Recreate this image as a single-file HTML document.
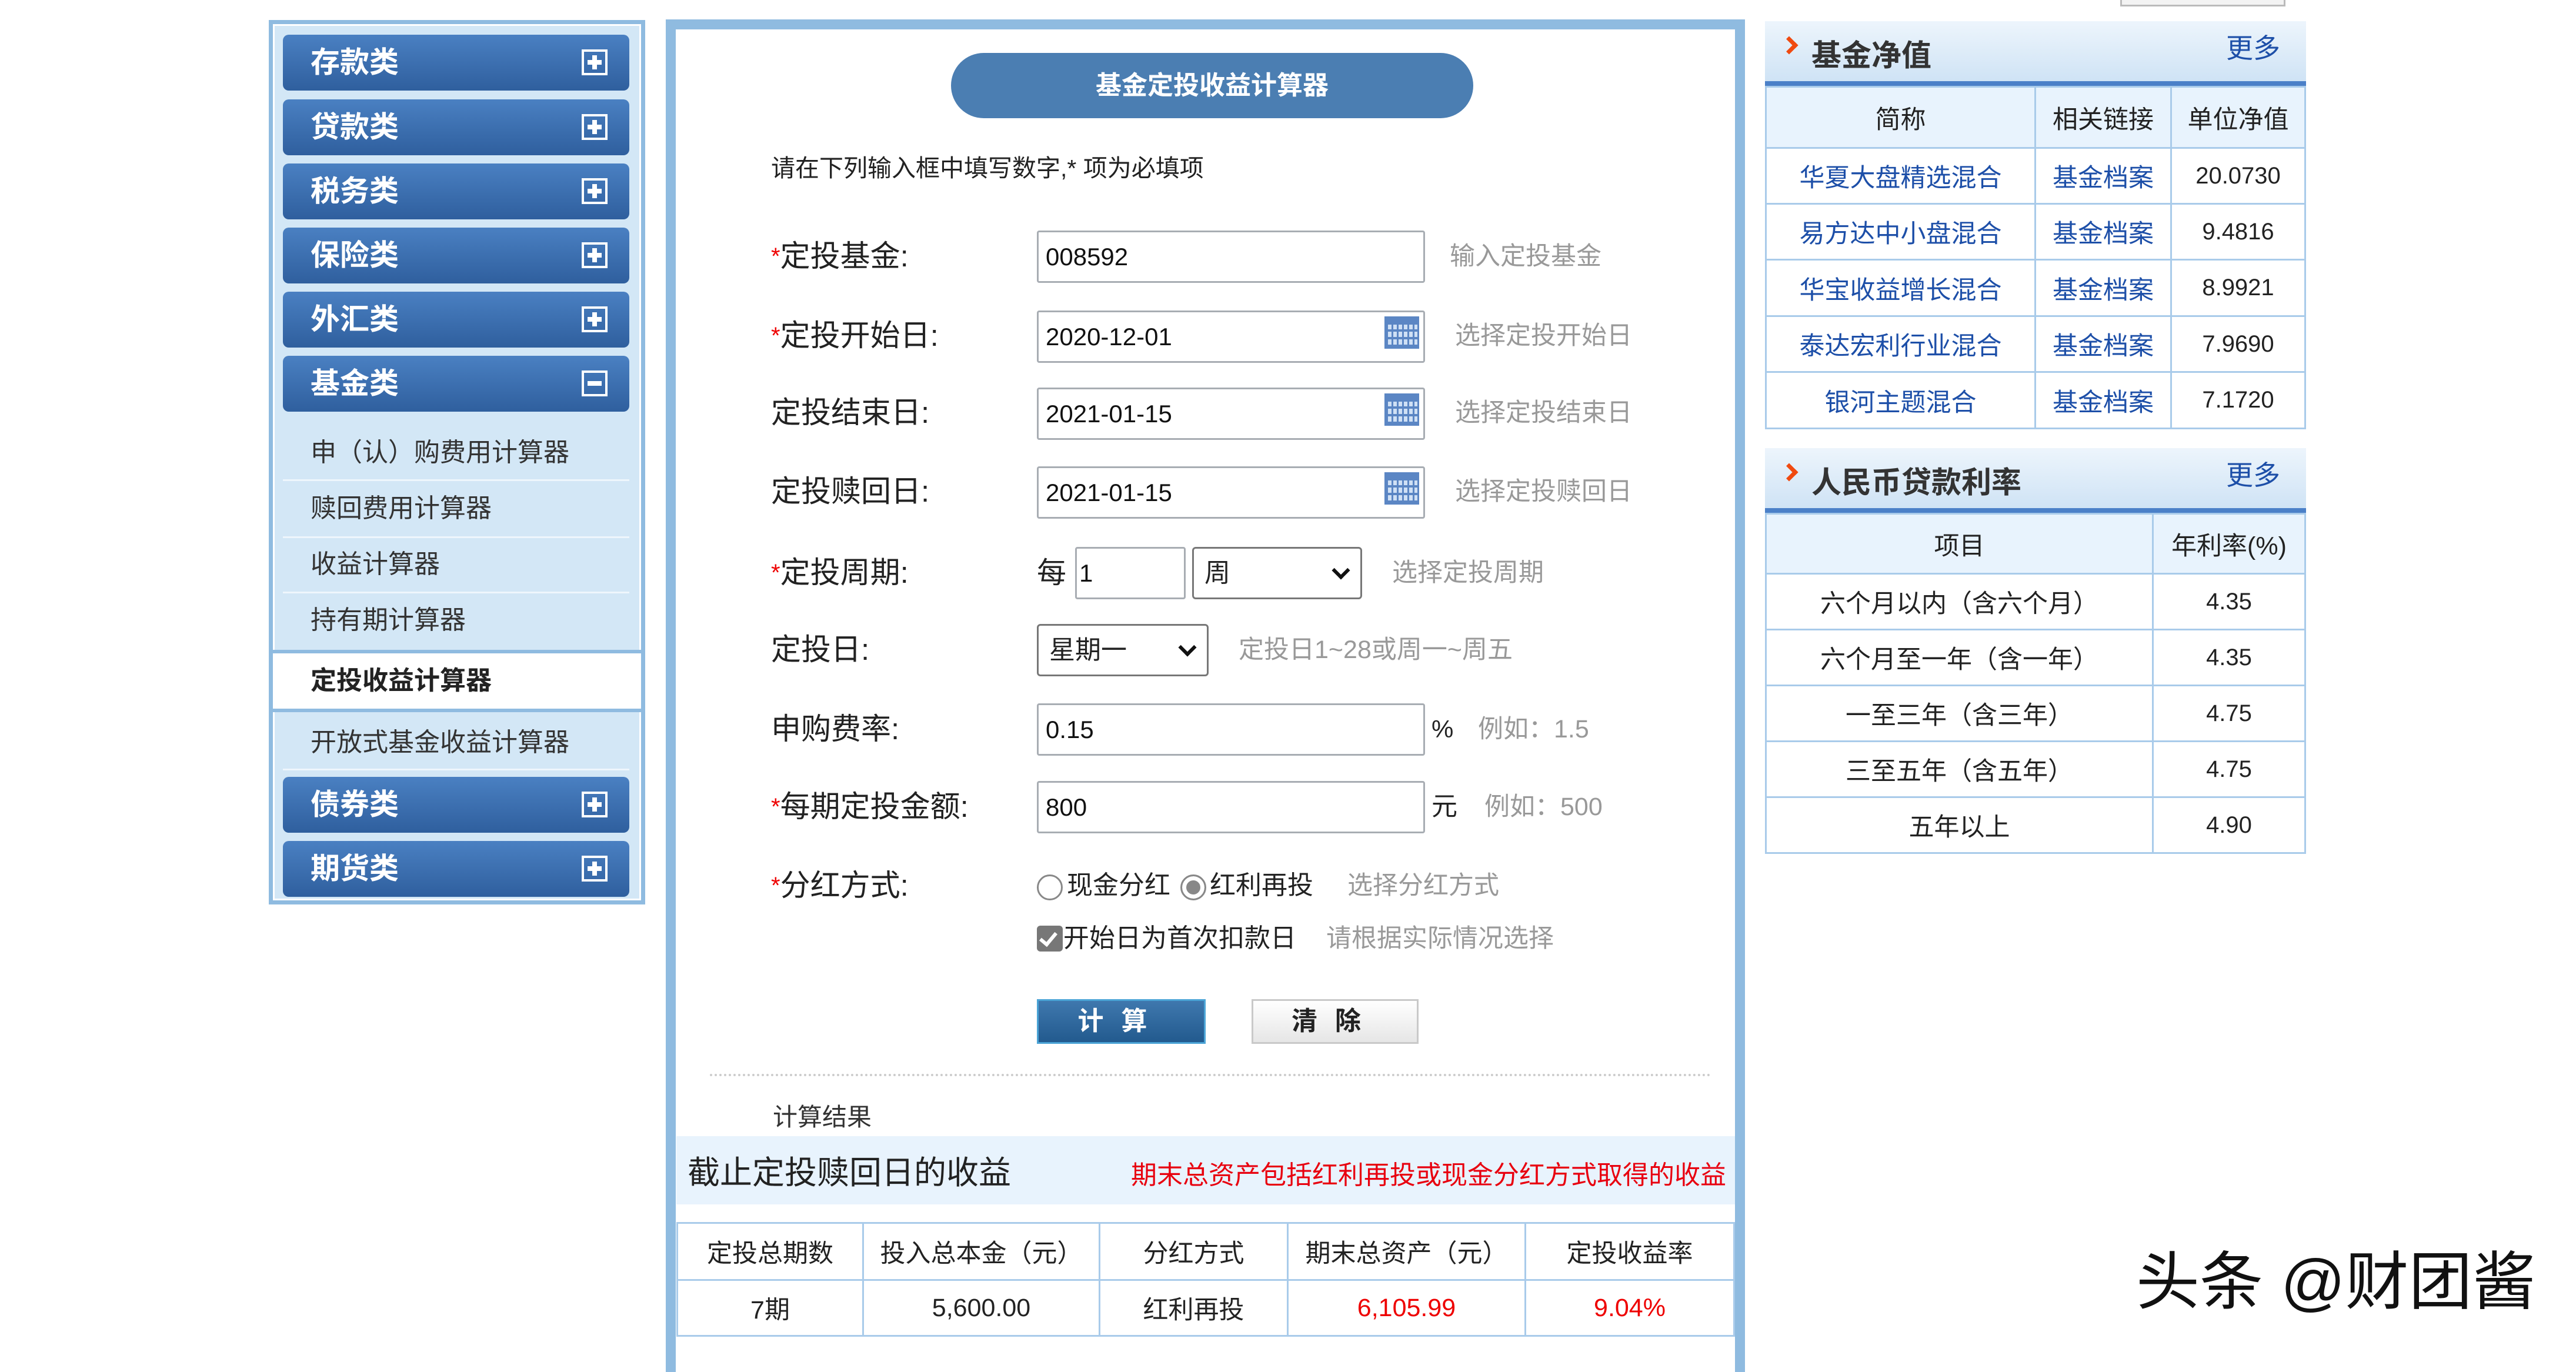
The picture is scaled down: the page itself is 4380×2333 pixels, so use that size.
<!DOCTYPE html>
<html><head><meta charset="utf-8"><style>
*{margin:0;padding:0;box-sizing:border-box}
body{width:4380px;height:2300px;background:#fff;position:relative;overflow:hidden;font-family:"Liberation Sans","Noto Sans CJK SC",sans-serif;color:#222}
.a{position:absolute;white-space:nowrap}
.btn{position:absolute;left:481px;width:589px;height:95px;border-radius:10px;background:linear-gradient(#4a80c2,#2f5f9e);color:#fff;font-weight:bold;font-size:50px;line-height:95px;padding-left:47px}
.pl{position:absolute;right:37px;top:25px;width:44px;height:44px;border:4px solid #fff}
.pl:before{content:"";position:absolute;left:6px;right:6px;top:14px;height:8px;background:#fff}
.pl.p:after{content:"";position:absolute;top:6px;bottom:6px;left:14px;width:8px;background:#fff}
.sub{position:absolute;left:528px;font-size:44px;color:#333;line-height:60px}
.sep{position:absolute;left:481px;width:589px;height:3px;background:#eef6fc}
.lbl{position:absolute;left:1311px;font-size:51px;line-height:70px;color:#222}
.lbl i{color:#e00;font-style:normal;font-size:40px;vertical-align:top}
.inp{position:absolute;left:1763px;height:89px;border:3px solid #a8adb3;border-radius:4px;background:#fff;font-size:42px;line-height:83px;padding-left:12px;color:#111}
.hint{position:absolute;font-size:43px;color:#999;line-height:60px}
.sel{position:absolute;height:89px;border:3px solid #777;border-radius:6px;background:#fff;font-size:44px;line-height:83px;padding-left:18px}
.sel:after{content:"";position:absolute;right:22px;top:26px;width:16px;height:16px;border-right:6px solid #111;border-bottom:6px solid #111;transform:rotate(45deg)}
.cal{position:absolute;left:2354px;width:59px;height:55px;background:#5b86c4}
.cal:before{content:"";position:absolute;left:3px;right:3px;top:14px;bottom:3px;background:repeating-linear-gradient(90deg,#5b86c4 0 3px,#cfe0f5 3px 9px)}
.cal:after{content:"";position:absolute;left:3px;right:3px;top:14px;bottom:3px;background:repeating-linear-gradient(0deg,#5b86c4 0 4px,transparent 4px 13px)}
table{border-collapse:collapse;position:absolute}
td{border:3px solid #a9cbea;text-align:center;font-size:43px;padding:0}
.hd{position:absolute;left:3001px;width:920px;height:110px;background:linear-gradient(#edf5fc,#cfe3f5);border-bottom:8px solid #4b80c8}
.hd b{position:absolute;left:79px;font-size:51px;color:#333;line-height:110px;top:4px}
.hd .m{position:absolute;right:44px;top:6px;font-size:46px;color:#1d4fa8;line-height:80px}
.hd .ar{position:absolute;left:30px;top:30px;width:22px;height:22px;border-right:7px solid #f04a10;border-top:7px solid #f04a10;transform:rotate(45deg)}
.blue{color:#1d4fa8}
</style></head><body>

<div class="a" style="left:457px;top:34px;width:640px;height:1504px;border:7px solid #8fbbe0;background:#d3e7f6;box-shadow:inset 0 0 0 3px #fff"></div>
<div class="btn" style="top:59px">存款类<span class="pl p"></span></div>
<div class="btn" style="top:169px">贷款类<span class="pl p"></span></div>
<div class="btn" style="top:278px">税务类<span class="pl p"></span></div>
<div class="btn" style="top:387px">保险类<span class="pl p"></span></div>
<div class="btn" style="top:496px">外汇类<span class="pl p"></span></div>
<div class="btn" style="top:605px">基金类<span class="pl"></span></div>
<div class="sub" style="top:740px">申（认）购费用计算器</div>
<div class="sep" style="top:815px"></div>
<div class="sub" style="top:835px">赎回费用计算器</div>
<div class="sep" style="top:912px"></div>
<div class="sub" style="top:930px">收益计算器</div>
<div class="sep" style="top:1006px"></div>
<div class="sub" style="top:1025px">持有期计算器</div>
<div class="a" style="left:464px;top:1105px;width:626px;height:106px;background:#fff;border-top:6px solid #8fbbe0;border-bottom:6px solid #8fbbe0"></div>
<div class="sub" style="top:1128px;font-weight:bold;color:#222">定投收益计算器</div>
<div class="sub" style="top:1233px">开放式基金收益计算器</div>
<div class="sep" style="top:1307px"></div>
<div class="btn" style="top:1321px">债券类<span class="pl p"></span></div>
<div class="btn" style="top:1430px">期货类<span class="pl p"></span></div>

<div class="a" style="left:1132px;top:33px;width:1835px;height:2300px;border:17px solid #8fbbe0;border-bottom:none;background:#fff"></div>
<div class="a" style="left:1617px;top:90px;width:888px;height:111px;border-radius:56px;background:#4b7eb2;color:#fff;font-weight:bold;font-size:44px;line-height:111px;text-align:center">基金定投收益计算器</div>
<div class="a" style="left:1311px;top:258px;font-size:41px;line-height:56px">请在下列输入框中填写数字,* 项为必填项</div>

<div class="lbl" style="top:401px"><i>*</i>定投基金:</div>
<div class="inp" style="top:392px;width:660px">008592</div>
<div class="hint" style="left:2465px;top:406px">输入定投基金</div>

<div class="lbl" style="top:536px"><i>*</i>定投开始日:</div>
<div class="inp" style="top:528px;width:660px">2020-12-01</div><div class="cal" style="top:538px"></div>
<div class="hint" style="left:2474px;top:541px">选择定投开始日</div>

<div class="lbl" style="top:667px">定投结束日:</div>
<div class="inp" style="top:659px;width:660px">2021-01-15</div><div class="cal" style="top:669px"></div>
<div class="hint" style="left:2474px;top:672px">选择定投结束日</div>

<div class="lbl" style="top:801px">定投赎回日:</div>
<div class="inp" style="top:793px;width:660px">2021-01-15</div><div class="cal" style="top:803px"></div>
<div class="hint" style="left:2474px;top:806px">选择定投赎回日</div>

<div class="lbl" style="top:939px"><i>*</i>定投周期:</div>
<div class="a" style="left:1763px;top:944px;font-size:50px;line-height:60px">每</div>
<div class="inp" style="left:1828px;top:930px;width:188px;padding-left:4px">1</div>
<div class="sel" style="left:2027px;top:930px;width:289px">周</div>
<div class="hint" style="left:2367px;top:944px">选择定投周期</div>

<div class="lbl" style="top:1070px">定投日:</div>
<div class="sel" style="left:1763px;top:1061px;width:292px">星期一</div>
<div class="hint" style="left:2106px;top:1075px">定投日1~28或周一~周五</div>

<div class="lbl" style="top:1205px">申购费率:</div>
<div class="inp" style="top:1196px;width:660px">0.15</div>
<div class="a" style="left:2434px;top:1212px;font-size:42px;line-height:56px">%</div>
<div class="hint" style="left:2513px;top:1210px">例如：1.5</div>

<div class="lbl" style="top:1337px"><i>*</i>每期定投金额:</div>
<div class="inp" style="top:1328px;width:660px">800</div>
<div class="a" style="left:2434px;top:1344px;font-size:44px;line-height:56px">元</div>
<div class="hint" style="left:2524px;top:1342px">例如：500</div>

<div class="lbl" style="top:1471px"><i>*</i>分红方式:</div>
<div class="a" style="left:1763px;top:1487px;width:44px;height:44px;border:3px solid #888;border-radius:50%"></div>
<div class="a" style="left:1814px;top:1476px;font-size:44px;line-height:60px">现金分红</div>
<div class="a" style="left:2007px;top:1487px;width:44px;height:44px;border:3px solid #888;border-radius:50%;box-shadow:inset 0 0 0 7px #fff;background:#888"></div>
<div class="a" style="left:2057px;top:1476px;font-size:44px;line-height:60px">红利再投</div>
<div class="hint" style="left:2291px;top:1476px">选择分红方式</div>

<div class="a" style="left:1763px;top:1574px;width:44px;height:44px;background:#777;border-radius:6px"></div>
<div class="a" style="left:1774px;top:1580px;width:17px;height:28px;border-right:6px solid #fff;border-bottom:6px solid #fff;transform:rotate(40deg)"></div>
<div class="a" style="left:1808px;top:1566px;font-size:44px;line-height:60px">开始日为首次扣款日</div>
<div class="hint" style="left:2255px;top:1566px">请根据实际情况选择</div>

<div class="a" style="left:1763px;top:1699px;width:287px;height:76px;border:3px solid #4ba4d6;background:linear-gradient(#3f78ae,#225a8e);color:#fff;font-size:44px;line-height:70px;text-align:center;letter-spacing:30px;font-weight:bold">计算</div>
<div class="a" style="left:2128px;top:1699px;width:284px;height:76px;border:3px solid #c9c9c9;background:linear-gradient(#fff,#e6e6e6);color:#222;font-size:44px;line-height:70px;text-align:center;letter-spacing:30px;font-weight:bold">清除</div>

<div class="a" style="left:1207px;top:1826px;width:1702px;border-top:4px dotted #ccc"></div>
<div class="a" style="left:1314px;top:1872px;font-size:42px;line-height:56px;color:#333">计算结果</div>
<div class="a" style="left:1150px;top:1932px;width:1800px;height:116px;background:#e8f3fd"></div>
<div class="a" style="left:1169px;top:1958px;font-size:55px;line-height:72px">截止定投赎回日的收益</div>
<div class="a" style="right:1445px;top:1969px;font-size:44px;line-height:60px;color:#e8000f">期末总资产包括红利再投或现金分红方式取得的收益</div>

<table style="left:1150px;top:2078px;width:1800px">
<tr style="height:97px"><td style="width:316px">定投总期数</td><td style="width:402px">投入总本金（元）</td><td style="width:320px">分红方式</td><td style="width:404px">期末总资产（元）</td><td>定投收益率</td></tr>
<tr style="height:95px;font-size:40px"><td>7期</td><td>5,600.00</td><td>红利再投</td><td style="color:#e00">6,105.99</td><td style="color:#e00">9.04%</td></tr>
</table>

<div class="a" style="left:3605px;top:-4px;width:281px;height:15px;border:3px solid #bbb;background:#f3f3f3"></div>

<div class="hd" style="top:36px"><span class="ar"></span><b>基金净值</b><span class="m">更多</span></div>
<table style="left:3001px;top:146px;width:920px">
<tr style="height:104px;background:#e8f3fd"><td style="width:458px">简称</td><td style="width:231px">相关链接</td><td>单位净值</td></tr>
<tr style="height:95px"><td class="blue">华夏大盘精选混合</td><td class="blue">基金档案</td><td style="font-size:40px">20.0730</td></tr>
<tr style="height:95px"><td class="blue">易方达中小盘混合</td><td class="blue">基金档案</td><td style="font-size:40px">9.4816</td></tr>
<tr style="height:96px"><td class="blue">华宝收益增长混合</td><td class="blue">基金档案</td><td style="font-size:40px">8.9921</td></tr>
<tr style="height:95px"><td class="blue">泰达宏利行业混合</td><td class="blue">基金档案</td><td style="font-size:40px">7.9690</td></tr>
<tr style="height:96px"><td class="blue">银河主题混合</td><td class="blue">基金档案</td><td style="font-size:40px">7.1720</td></tr>
</table>

<div class="hd" style="top:762px"><span class="ar"></span><b>人民币贷款利率</b><span class="m">更多</span></div>
<table style="left:3001px;top:872px;width:920px">
<tr style="height:102px;background:#e8f3fd"><td style="width:658px">项目</td><td>年利率(%)</td></tr>
<tr style="height:95px"><td>六个月以内（含六个月）</td><td style="font-size:40px">4.35</td></tr>
<tr style="height:95px"><td>六个月至一年（含一年）</td><td style="font-size:40px">4.35</td></tr>
<tr style="height:95px"><td>一至三年（含三年）</td><td style="font-size:40px">4.75</td></tr>
<tr style="height:95px"><td>三至五年（含五年）</td><td style="font-size:40px">4.75</td></tr>
<tr style="height:95px"><td>五年以上</td><td style="font-size:40px">4.90</td></tr>
</table>

<div class="a" style="left:3632px;top:2110px;font-size:108px;line-height:140px;color:#111;text-shadow:0 0 4px #fff">头条 @财团酱</div>
</body></html>
